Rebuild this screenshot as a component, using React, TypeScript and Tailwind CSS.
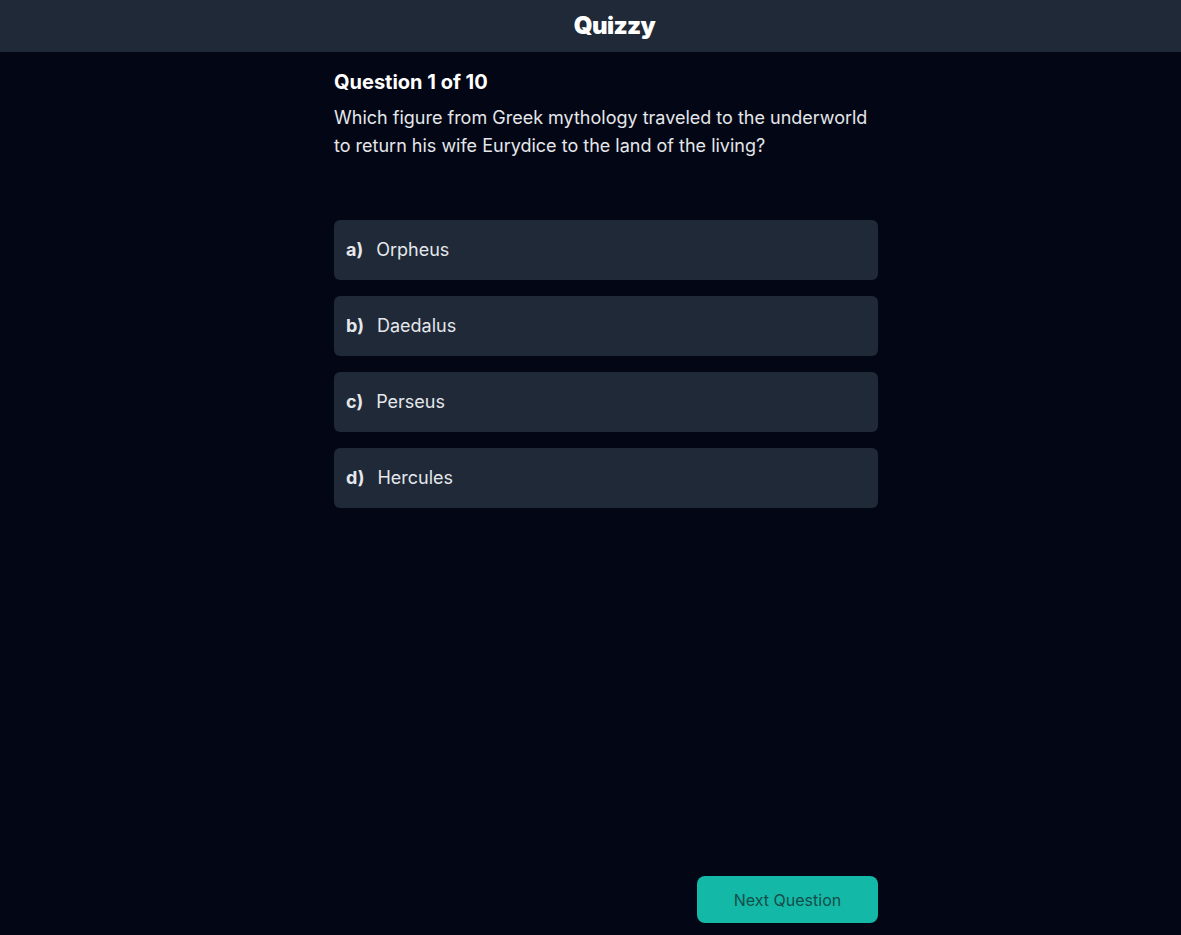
import React, { useState } from 'react';

const options = [
  { key: 'a', text: 'Orpheus' },
  { key: 'b', text: 'Daedalus' },
  { key: 'c', text: 'Perseus' },
  { key: 'd', text: 'Hercules' },
];

const App: React.FC = () => {
  const [selected, setSelected] = useState<string | null>(null);

  return (
    <div className="min-h-screen flex flex-col bg-[#030614] font-['Inter',sans-serif]">
      <header className="h-[52px] bg-[#1f2937] flex items-center justify-center pl-12">
        <h1 className="text-2xl font-black text-white tracking-tight">Quizzy</h1>
      </header>

      <main className="flex-1 flex justify-center pl-[31px]">
        <div className="w-[544px] flex flex-col pt-4 pb-3">
          <h2 className="text-xl font-bold text-white leading-7">Question 1 of 10</h2>
          <p className="mt-2 text-lg leading-7 text-gray-200">
            Which figure from Greek mythology traveled to the underworld to return his wife Eurydice to the land of the living?
          </p>

          {/* Options */}
          <div className="mt-[60px] flex flex-col gap-4">
            {options.map((opt) => (
              <button
                key={opt.key}
                onClick={() => setSelected(opt.key)}
                className={`h-[60px] flex items-center gap-[13px] px-3 rounded-md text-left text-lg ${
                  selected === opt.key ? 'bg-[#374151]' : 'bg-[#1f2937]'
                }`}
              >
                <span className="font-bold text-gray-200">{opt.key})</span>
                <span className="text-gray-200">{opt.text}</span>
              </button>
            ))}
          </div>

          <div className="flex-1" />

          <div className="flex justify-end">
            <button className="w-[181px] h-[47px] rounded-lg bg-[#14b8a6] text-[#134e4a] text-base">
              Next Question
            </button>
          </div>
        </div>
      </main>
    </div>
  );
};

export default App;
